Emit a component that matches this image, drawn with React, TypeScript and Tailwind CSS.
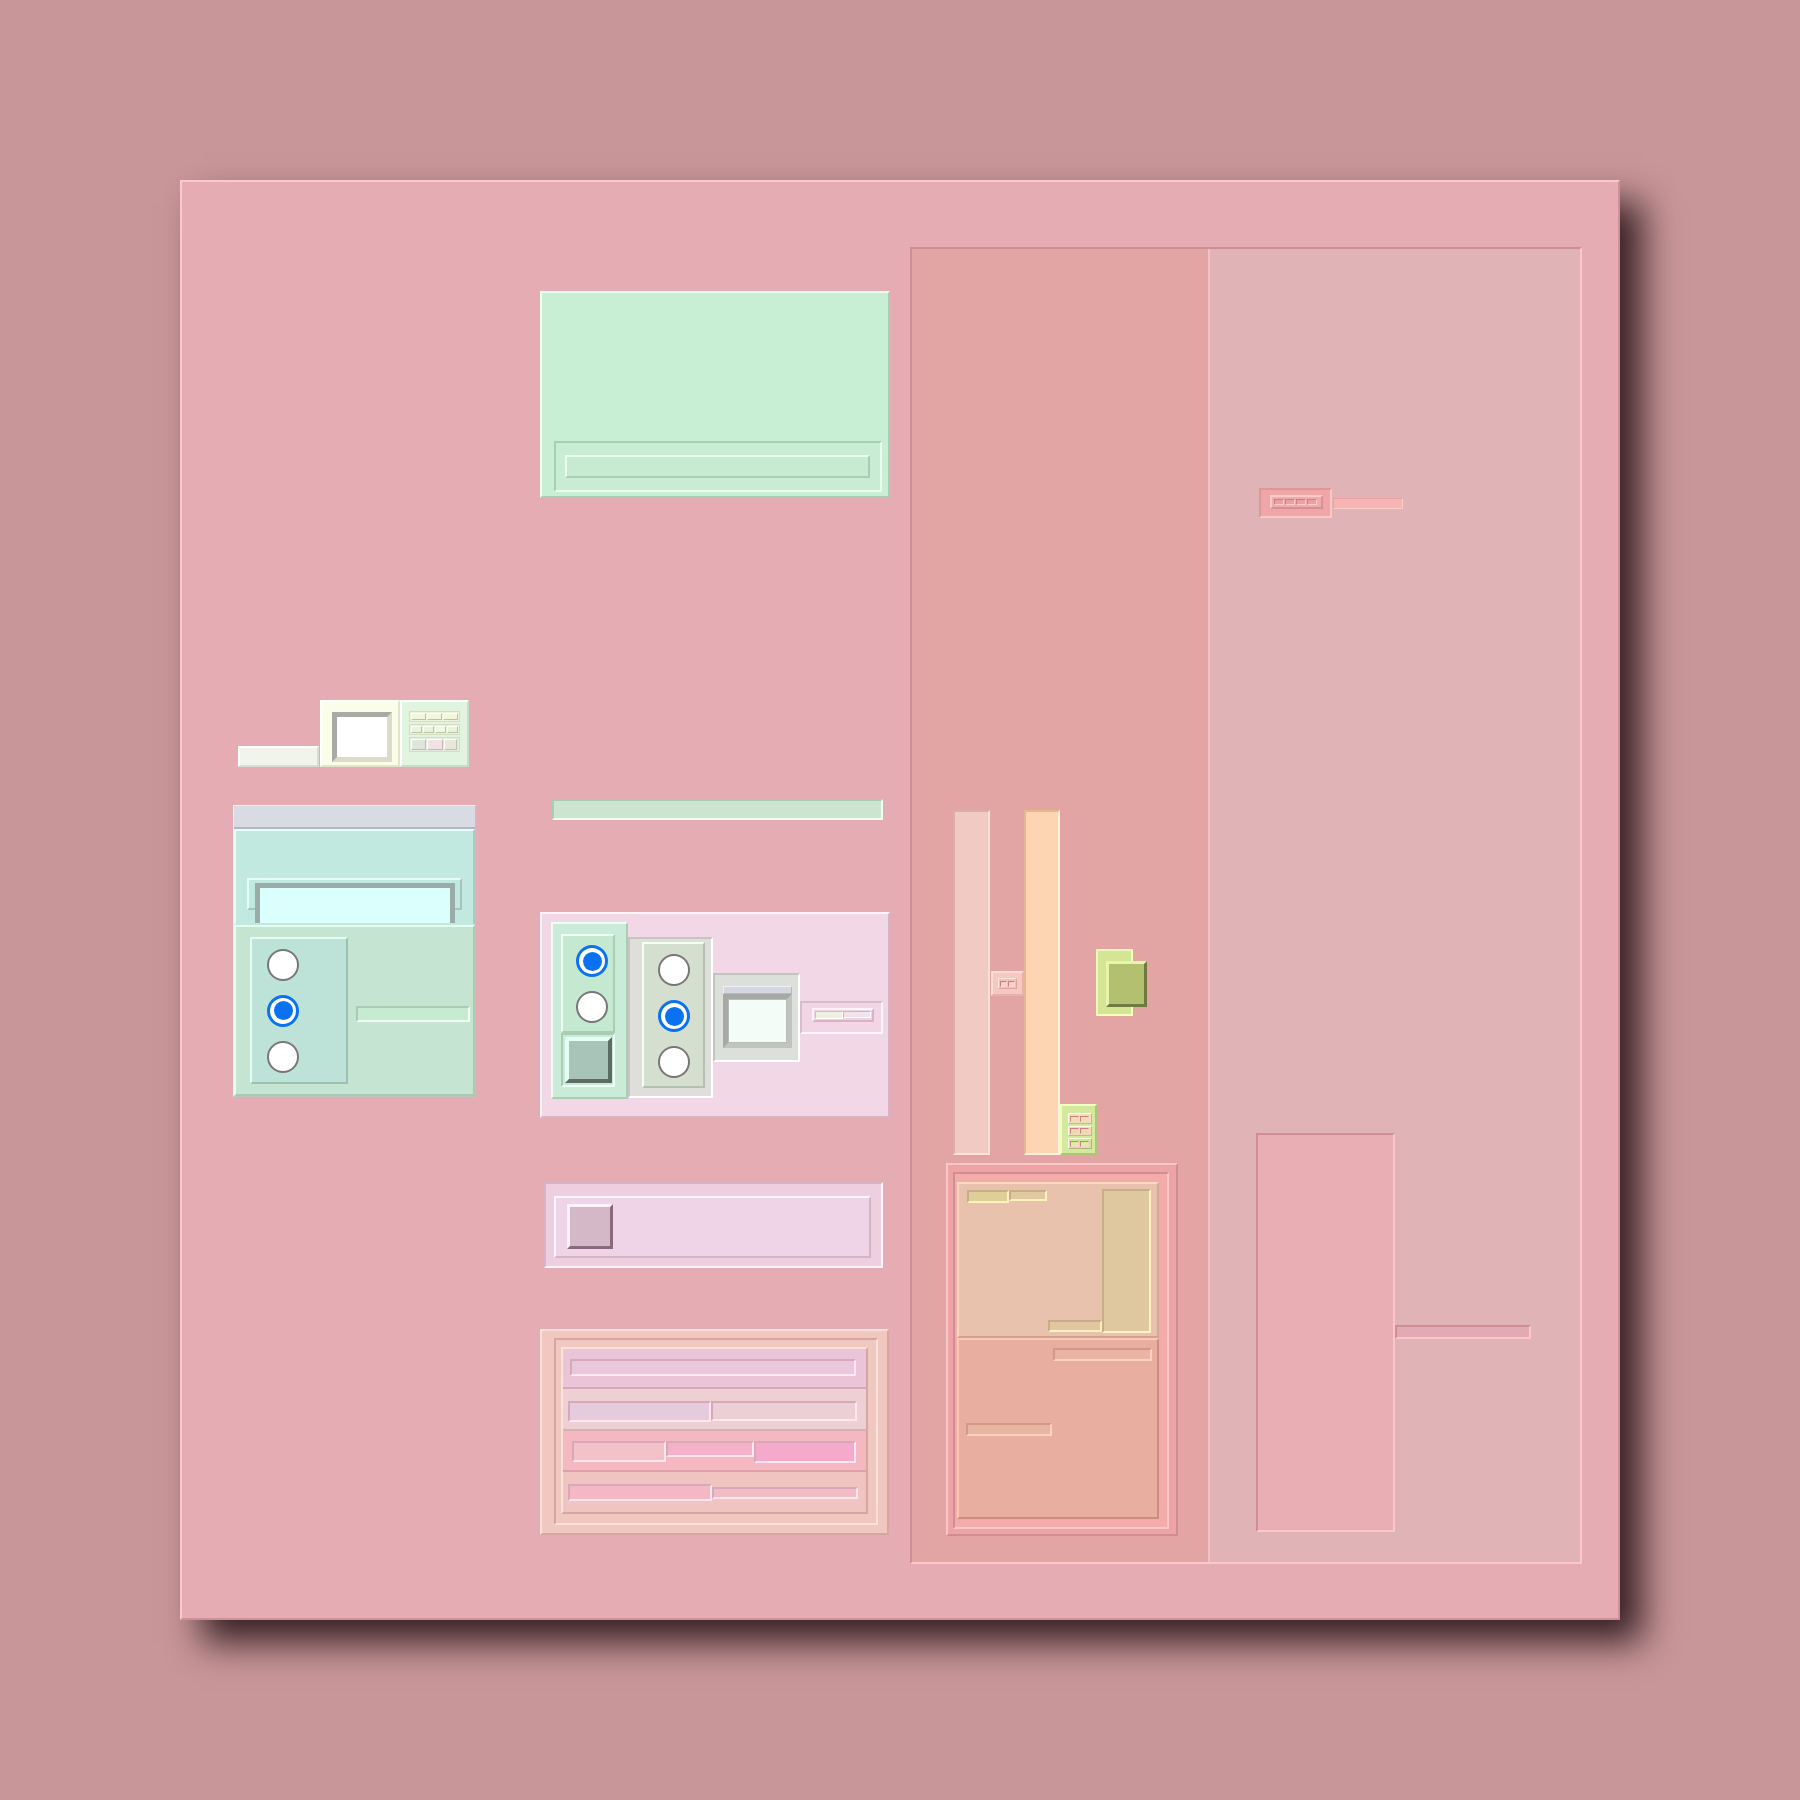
// Bevelled widget board, rendered as nested flow boxes.

const RAISED_GREEN = 'border-2 border-t-[#ecfff2] border-l-[#ecfff2] border-b-[#a9cdb3] border-r-[#a9cdb3]'
const SUNKEN_GREEN = 'border-2 border-t-[#a9cdb3] border-l-[#a9cdb3] border-b-[#ecfff2] border-r-[#ecfff2]'
const RAISED_PINK = 'border-2 border-t-[#fff4fa] border-l-[#fff4fa] border-b-[#d6b4c6] border-r-[#d6b4c6]'
const SUNKEN_PINK = 'border-2 border-t-[#d6b4c6] border-l-[#d6b4c6] border-b-[#fff4fa] border-r-[#fff4fa]'
const RAISED_ROSE = 'border-2 border-t-[#ffe2dc] border-l-[#ffe2dc] border-b-[#d8a6a0] border-r-[#d8a6a0]'
const SUNKEN_ROSE = 'border-2 border-t-[#d8a6a0] border-l-[#d8a6a0] border-b-[#ffe2dc] border-r-[#ffe2dc]'
const SUNKEN_RED = 'border-2 border-t-[#cf8e94] border-l-[#cf8e94] border-b-[#fcc6ca] border-r-[#fcc6ca]'
const RAISED_RED = 'border-2 border-t-[#fcc6ca] border-l-[#fcc6ca] border-b-[#cf8e94] border-r-[#cf8e94]'
const SUNKEN_SAND = 'border-2 border-t-[#c8ae86] border-l-[#c8ae86] border-b-[#fff0c8] border-r-[#fff0c8]'

function Radio({ on }: { on?: boolean }) {
  if (on) {
    return (
      <div className="flex h-[32px] w-[32px] items-center justify-center rounded-full border-[3px] border-[#0a72f0] bg-white">
        <div className="h-[19px] w-[19px] rounded-full bg-[#0a72f0]" />
      </div>
    )
  }
  return <div className="h-[32px] w-[32px] rounded-full border-2 border-[#7a7676] bg-white" />
}

function Cell({ w, bg }: { w: number; bg: string }) {
  return (
    <div
      className="h-full border border-t-[#ffffff] border-l-[#ffffff] border-b-[#b9c2ad] border-r-[#b9c2ad]"
      style={{ width: w, background: bg }}
    />
  )
}

function SmallWidgets() {
  return (
    <div className="ml-[5px] flex items-end">
      <div className="h-[21px] w-[81px] border-2 border-t-[#ffffff] border-l-[#ffffff] border-b-[#d8ddd0] border-r-[#d8ddd0] bg-[#f0f4ea]" />
      <div className="ml-[1px] h-[67px] w-[80px] border-2 border-t-[#ffffff] border-l-[#ffffff] border-b-[#e2e6c8] border-r-[#e2e6c8] bg-[#fafde8] pl-[10px] pt-[10px]">
        <div className="h-[50px] w-[60px] border-[5px] border-t-[#a9a9a6] border-l-[#a9a9a6] border-b-[#dcdcc6] border-r-[#dcdcc6] bg-white" />
      </div>
      <div className="h-[67px] w-[69px] border-2 border-t-[#ffffff] border-l-[#ffffff] border-b-[#c8dcc8] border-r-[#c8dcc8] bg-[#e0f4e0] pl-[7px] pt-[9px]">
        <div className="flex w-[51px] flex-col gap-[2px]">
          <div className="flex h-[11px] gap-[1px] border border-[#d4dcc4] bg-[#eef4dc] p-[1px]">
            <Cell w={15} bg="#f2f6dc" />
            <Cell w={15} bg="#f2f6dc" />
            <Cell w={15} bg="#f2f6dc" />
          </div>
          <div className="flex h-[11px] gap-[1px] border border-[#d4dcc4] bg-[#e8f4d8] p-[1px]">
            <Cell w={11} bg="#e8f4d8" />
            <Cell w={11} bg="#e8f4d8" />
            <Cell w={11} bg="#f0f8e0" />
            <Cell w={11} bg="#e8f4d8" />
          </div>
          <div className="flex h-[15px] items-end gap-[1px] border border-[#d4dcc4] bg-[#e6ece0] p-[1px]">
            <Cell w={15} bg="#dde6d8" />
            <div className="h-[11px] w-[16px] self-start border border-t-[#ffffff] border-l-[#ffffff] border-b-[#c4b4b8] border-r-[#c4b4b8] bg-[#f2e2e6]" />
            <Cell w={13} bg="#e8e8da" />
          </div>
        </div>
      </div>
    </div>
  )
}

function TealWidget() {
  return (
    <div className="mt-[38px] flex h-[292px] w-[243px] flex-col border border-[#e8f4f0] border-b-[#b8c8c0] border-r-[#b8c8c0]">
      <div className="h-[23px] border-b-2 border-b-[#b4b6c4] bg-[#d8dae4]" />
      <div className="relative h-[96px] overflow-hidden border-2 border-t-[#e4fff8] border-l-[#e4fff8] border-b-[#c2e9e0] border-r-[#a8c8c0] bg-[#c2e9e0]">
        <div className="absolute left-[11px] top-[47px] h-[32px] w-[215px] border-2 border-t-[#e4fff6] border-l-[#e4fff6] border-b-[#a4c4bc] border-r-[#a4c4bc]" />
        <div className="absolute left-[19px] top-[52px] h-[60px] w-[200px] border-[5px] border-[#9aaba8] border-b-[#aab8b4] bg-[#dafffc]" />
      </div>
      <div className="flex h-[172px] items-start border-2 border-t-[#e4fff0] border-l-[#e4fff0] border-b-[#a9c9b3] border-r-[#a9c9b3] bg-[#c5e5d2] pl-[14px] pt-[10px]">
        <div className="flex h-[147px] w-[98px] flex-col gap-[14px] border-2 border-t-[#e0fff4] border-l-[#e0fff4] border-b-[#9cc0b4] border-r-[#9cc0b4] bg-[#bde3d8] pl-[15px] pt-[10px]">
          <Radio />
          <Radio on />
          <Radio />
        </div>
        <div className={`ml-[8px] mt-[69px] h-[16px] w-[114px] ${SUNKEN_GREEN} bg-[#c6ebd0]`} />
      </div>
    </div>
  )
}

function GreenCard() {
  return (
    <div className={`flex h-[207px] w-[350px] flex-col justify-end ${RAISED_GREEN} bg-[#c8efd4] pb-[4px] pl-[12px]`}>
      <div className={`h-[51px] w-[328px] ${SUNKEN_GREEN} bg-[#c9ecd4] pl-[9px] pt-[12px]`}>
        <div className={`h-[23px] w-[305px] ${RAISED_GREEN} bg-[#c6ebd0]`} />
      </div>
    </div>
  )
}

function RadioWidget() {
  return (
    <div className={`mt-[92px] flex h-[206px] w-[350px] items-start ${RAISED_PINK} bg-[#f2d8e6] pl-[9px] pt-[8px]`}>
      <div className={`flex h-[177px] w-[77px] flex-col ${RAISED_GREEN} bg-[#c9ebd7] pl-[8px] pt-[10px]`}>
        <div className={`flex h-[99px] w-[54px] flex-col gap-[14px] ${RAISED_GREEN} bg-[#c5e9d0] pl-[13px] pt-[9px]`}>
          <Radio on />
          <Radio />
        </div>
        <div className={`h-[54px] w-[54px] ${SUNKEN_GREEN} bg-[#c9ebd7] pl-[2px] pt-[2px]`}>
          <div className="h-[46px] w-[47px] border-[4px] border-t-[#e4fff4] border-l-[#e4fff4] border-b-[#5e6a64] border-r-[#5e6a64] bg-[#a8c4b8]" />
        </div>
      </div>
      <div className="mt-[15px] h-[161px] w-[85px] border-2 border-t-[#c4c6c0] border-l-[#c4c6c0] border-b-[#ffffff] border-r-[#ffffff] bg-[#e0deda] pl-[12px] pt-[3px]">
        <div className="flex h-[146px] w-[63px] flex-col gap-[14px] border-2 border-t-[#f4fff0] border-l-[#f4fff0] border-b-[#b4c0b0] border-r-[#b4c0b0] bg-[#d5dfd0] pl-[14px] pt-[10px]">
          <Radio />
          <Radio on />
          <Radio />
        </div>
      </div>
      <div className="mt-[51px] h-[89px] w-[87px] border-2 border-t-[#c0c4bc] border-l-[#c0c4bc] border-b-[#ffffff] border-r-[#ffffff] bg-[#dde0da] pl-[8px] pt-[11px]">
        <div className="h-[8px] w-[69px] border border-t-[#eef0f8] border-l-[#eef0f8] border-b-[#b4b8c4] border-r-[#b4b8c4] bg-[#d4d6e0]" />
        <div className="h-[54px] w-[69px] border-[5px] border-t-[#a6aaa6] border-l-[#a6aaa6] border-b-[#c0c4c0] border-r-[#c0c4c0] bg-[#b8bcb8] p-[1px]">
          <div className="h-full w-full bg-[#f4fcf8]" />
        </div>
      </div>
      <div className="mt-[79px] h-[33px] w-[83px] border-2 border-t-[#d8bccc] border-l-[#d8bccc] border-b-[#fff4fa] border-r-[#fff4fa] bg-[#f2d6e6] pl-[10px] pt-[5px]">
        <div className={`flex h-[14px] w-[62px] ${RAISED_PINK} bg-[#eed2e2] p-[1px]`}>
          <div className="h-full w-[29px] border border-t-[#c8c8b8] border-l-[#c8c8b8] border-b-[#ffffff] border-r-[#ffffff] bg-[#eef0e0]" />
          <div className="h-[7px] w-[28px] border border-t-[#c8b8c0] border-l-[#c8b8c0] border-b-[#ffffff] border-r-[#ffffff] bg-[#f0e4ea]" />
        </div>
      </div>
    </div>
  )
}

function CheckWidget() {
  return (
    <div className={`ml-[4px] mt-[64px] h-[86px] w-[339px] ${SUNKEN_PINK} bg-[#eecfe0] pl-[8px] pt-[12px]`}>
      <div className={`h-[62px] w-[317px] ${RAISED_PINK} bg-[#eed4e6] pl-[11px] pt-[6px]`}>
        <div className="h-[45px] w-[46px] border-[3px] border-t-[#fff2fa] border-l-[#fff2fa] border-b-[#8a6a7a] border-r-[#8a6a7a] bg-[#d4b8c8]" />
      </div>
    </div>
  )
}

function TableWidget() {
  const bar = 'border-2 border-t-[#d6a8b8] border-l-[#d6a8b8] border-b-[#ffe6f0] border-r-[#ffe6f0]'
  return (
    <div className={`mt-[61px] h-[206px] w-[349px] ${RAISED_ROSE} bg-[#f0c8c0] pl-[12px] pt-[7px]`}>
      <div className={`h-[187px] w-[324px] ${SUNKEN_ROSE} bg-[#f0c8c0] pl-[5px] pt-[7px]`}>
        <div className={`flex h-[167px] w-[307px] flex-col ${RAISED_ROSE} bg-[#f0c8c0]`}>
          <div className="h-[40px] border-b-2 border-b-[#d4a8b8] bg-[#ebc4d8] pl-[7px] pt-[10px]">
            <div className={`h-[17px] w-[286px] ${bar} bg-[#e9c8dc]`} />
          </div>
          <div className="flex h-[43px] items-start border-b-2 border-b-[#d8b0b4] bg-[#edcfd4] pl-[5px] pt-[12px]">
            <div className={`h-[21px] w-[143px] ${bar} bg-[#e6cbdd]`} />
            <div className={`h-[20px] w-[146px] ${bar} bg-[#ebcfd4]`} />
          </div>
          <div className="flex h-[41px] items-start border-b-2 border-b-[#dca0a8] bg-[#f5b8c0] pl-[9px] pt-[10px]">
            <div className={`h-[21px] w-[94px] ${bar} bg-[#f2c2c8]`} />
            <div className={`h-[16px] w-[88px] ${bar} bg-[#f4b2c8]`} />
            <div className={`h-[22px] w-[102px] ${bar} bg-[#f5aacc]`} />
          </div>
          <div className="flex h-[41px] items-start bg-[#f0c4c0] pl-[5px] pt-[12px]">
            <div className={`h-[17px] w-[144px] ${bar} bg-[#f4b8c4]`} />
            <div className={`mt-[3px] h-[12px] w-[146px] ${bar} bg-[#f2bcc4]`} />
          </div>
        </div>
      </div>
    </div>
  )
}

function Notches({ n, bg }: { n: number; bg: string }) {
  return (
    <div className="flex h-full items-center gap-[1px]">
      {Array.from({ length: n }).map((_, i) => (
        <div
          key={i}
          className="h-[6px] w-[9px] border border-t-[#c98080] border-l-[#c98080] border-b-[#ffd0cc] border-r-[#ffd0cc]"
          style={{ background: bg }}
        />
      ))}
    </div>
  )
}

function BarsRow() {
  return (
    <div className="ml-[41px] mt-[561px] flex items-start">
      <div className="h-[345px] w-[37px] border-2 border-t-[#d8aea8] border-l-[#d8aea8] border-b-[#fde2dc] border-r-[#fde2dc] bg-[#f2cac4]" />
      <div className="ml-[1px] mt-[161px] h-[25px] w-[33px] border-2 border-t-[#ffdcd6] border-l-[#ffdcd6] border-b-[#e8b0a8] border-r-[#e8b0a8] bg-[#f5c8c0] pl-[5px] pt-[5px]">
        <div className="h-[11px] w-[19px] border border-t-[#ffe4e0] border-l-[#ffe4e0] border-b-[#d8a8a0] border-r-[#d8a8a0] bg-[#f2c0b8] px-[1px]">
          <Notches n={2} bg="#f8d0c8" />
        </div>
      </div>
      <div className="h-[345px] w-[36px] border-2 border-t-[#e6b890] border-l-[#e6b890] border-b-[#fff2dc] border-r-[#fff2dc] bg-[#fdd5b2]" />
      <div className="mt-[294px] flex h-[51px] w-[37px] flex-col gap-[2px] border-2 border-t-[#f0ffc0] border-l-[#f0ffc0] border-b-[#b0c478] border-r-[#b0c478] bg-[#d4e8a0] pl-[6px] pt-[7px]">
        <div className="h-[11px] w-[24px] border border-t-[#f8ffe0] border-l-[#f8ffe0] border-b-[#c0b898] border-r-[#c0b898] bg-[#eee0b8] px-[1px]">
          <Notches n={2} bg="#f0dcb0" />
        </div>
        <div className="h-[10px] w-[24px] border border-t-[#f8ffe0] border-l-[#f8ffe0] border-b-[#c0b898] border-r-[#c0b898] bg-[#ecdcb4] px-[1px]">
          <Notches n={2} bg="#ecd8b0" />
        </div>
        <div className="h-[11px] w-[24px] border border-t-[#f8ffe0] border-l-[#f8ffe0] border-b-[#a8bc70] border-r-[#a8bc70] bg-[#cce890] px-[1px]">
          <Notches n={2} bg="#d8f0a0" />
        </div>
      </div>
      <div className="-ml-[1px] mt-[139px] h-[67px] w-[37px] border-2 border-t-[#eef8b8] border-l-[#eef8b8] border-b-[#f6ffb8] border-r-[#f6ffb8] bg-[#d4e696] pl-[8px] pt-[10px]">
        <div className="h-[46px] w-[41px] border-[3px] border-t-[#e8f4a8] border-l-[#e8f4a8] border-b-[#6e7a40] border-r-[#6e7a40] bg-[#b2c070]" />
      </div>
    </div>
  )
}

function OrangeBox() {
  const sandBar = 'border-2 border-t-[#c8ae86] border-l-[#c8ae86] border-b-[#fff0c0] border-r-[#fff0c0]'
  const roseBar = 'border-2 border-t-[#d49888] border-l-[#d49888] border-b-[#ffd0c0] border-r-[#ffd0c0]'
  return (
    <div className={`ml-[34px] mt-[8px] h-[373px] w-[232px] ${RAISED_RED} bg-[#eea4a4] pl-[5px] pt-[7px]`}>
      <div className={`h-[357px] w-[216px] ${SUNKEN_RED} bg-[#f4acaa] pl-[2px] pt-[8px]`}>
        <div className="flex h-[337px] w-[202px] flex-col">
          <div className="flex h-[156px] items-start border-2 border-t-[#fcd8c0] border-l-[#fcd8c0] border-b-[#d0a28e] border-r-[#d4a896] bg-[#e8c2ac] pt-[5px]">
            <div className="flex h-[144px] w-[143px] flex-col justify-between">
              <div className="ml-[8px] mt-[1px] flex">
                <div className={`h-[13px] w-[42px] ${sandBar} bg-[#dcd096]`} />
                <div className={`h-[11px] w-[38px] ${sandBar} bg-[#e0c8a0]`} />
              </div>
              <div className={`mb-[1px] h-[12px] w-[54px] self-end ${sandBar} bg-[#e2c6a0]`} />
            </div>
            <div className={`h-[144px] w-[49px] ${SUNKEN_SAND} bg-[#dfc8a0]`} />
          </div>
          <div className="flex h-[181px] flex-col items-start border-2 border-t-[#ffc8b4] border-l-[#ffc8b4] border-b-[#cc8c80] border-r-[#cc8c80] bg-[#e8afa0]">
            <div className={`ml-[94px] mt-[8px] h-[13px] w-[99px] ${roseBar} bg-[#eab4a4]`} />
            <div className={`ml-[7px] mt-[62px] h-[13px] w-[86px] ${roseBar} bg-[#e8b6a0]`} />
          </div>
        </div>
      </div>
    </div>
  )
}

function LightColumn() {
  return (
    <div className="flex flex-1 flex-col border-l-2 border-l-[#f4c0c4] bg-[#e0b3b6]">
      <div className="ml-[49px] mt-[239px] flex items-start">
        <div className="h-[30px] w-[73px] border-2 border-t-[#dc9898] border-l-[#dc9898] border-b-[#ffc6c6] border-r-[#ffc6c6] bg-[#f0a6a6] pl-[9px] pt-[5px]">
          <div className="h-[14px] w-[53px] border-2 border-t-[#ffcaca] border-l-[#ffcaca] border-b-[#d89090] border-r-[#d89090] bg-[#f0acac] px-[2px]">
            <div className="flex h-full items-center gap-[1px]">
              {[0, 1, 2, 3].map((i) => (
                <div key={i} className="h-[6px] w-[10px] border border-t-[#c88080] border-l-[#c88080] border-b-[#ffcccc] border-r-[#ffcccc] bg-[#eea0a0]" />
              ))}
            </div>
          </div>
        </div>
        <div className="ml-[1px] mt-[10px] h-[11px] w-[70px] border border-t-[#e8a0a0] border-l-[#e8a0a0] border-b-[#ffcccc] border-r-[#ffcccc] bg-[#f8b4b4]" />
      </div>
      <div className="ml-[46px] mt-[615px] flex items-start">
        <div className={`h-[399px] w-[139px] ${SUNKEN_RED} bg-[#e8aeb4]`} />
        <div className={`mt-[192px] h-[14px] w-[136px] ${SUNKEN_RED} bg-[#e4aab4]`} />
      </div>
    </div>
  )
}

export default function App() {
  return (
    <div className="min-h-[1800px] w-[1800px] bg-[#c89698] p-[180px] font-['Liberation_Sans',sans-serif]">
      <div className="flex h-[1440px] w-[1440px] items-start border-2 border-t-[#fbc9cd] border-l-[#fbc9cd] border-b-[#cf9199] border-r-[#cf9199] bg-[#e5adb3] shadow-[22px_22px_34px_rgba(45,25,30,0.95)]">
        {/* left column */}
        <div className="ml-[51px] mt-[518px] flex w-[243px] flex-col">
          <SmallWidgets />
          <TealWidget />
        </div>

        {/* middle column */}
        <div className="ml-[64px] mt-[109px] flex w-[350px] flex-col items-start">
          <GreenCard />
          <div className={`ml-[12px] mt-[301px] h-[21px] w-[331px] ${SUNKEN_GREEN} bg-[#cbe5d1]`} />
          <RadioWidget />
          <CheckWidget />
          <TableWidget />
        </div>

        {/* right area */}
        <div className={`ml-[20px] mt-[65px] flex h-[1317px] w-[672px] ${SUNKEN_RED}`}>
          <div className="flex w-[296px] flex-col bg-[#e3a4a4]">
            <BarsRow />
            <OrangeBox />
          </div>
          <LightColumn />
        </div>
      </div>
    </div>
  )
}
